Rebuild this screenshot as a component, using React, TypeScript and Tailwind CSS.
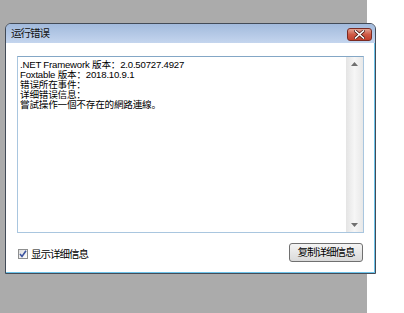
export default function App() {
  const lines = [
    ".NET Framework 版本：2.0.50727.4927",
    "Foxtable 版本：2018.10.9.1",
    "错误所在事件：",
    "详细错误信息：",
    "嘗試操作一個不存在的網路連線。",
  ];
  return (
    <div className="relative flex h-[313px] w-[404px] overflow-hidden font-['Liberation_Sans','Noto_Sans_CJK_SC',sans-serif] text-[10px] text-black">
      <div className="h-full w-[367px] bg-[#ababab]" />
      <div className="h-full flex-1 bg-white" />

      <div className="absolute left-[5px] top-[23px] flex h-[251px] w-[371px] flex-col overflow-hidden rounded-t-[6px] border border-[#434b57] bg-[#bcd0ec]">
        {/* title bar */}
        <div className="flex h-[19px] shrink-0 items-start justify-between bg-gradient-to-b from-[#a2badc] to-[#c4d5ee] pl-[5px] pr-[3px]">
          <span className="mt-[4px] text-[10.5px] leading-[11px] tracking-[-1px] text-[#111]">运行错误</span>
          <div className="mt-[4px] flex h-[13px] w-[25px] items-center justify-center rounded-[3px] border border-[#7a2a22] bg-gradient-to-b from-[#e2a393] via-[#cf5a45] to-[#c2402c]">
            <svg width="11" height="9" viewBox="0 0 11 9">
              <path d="M1.5 1 L9.5 8 M9.5 1 L1.5 8" stroke="#4a1a14" strokeWidth="3" strokeLinecap="square" />
              <path d="M1.5 1 L9.5 8 M9.5 1 L1.5 8" stroke="#ffffff" strokeWidth="1.6" strokeLinecap="square" />
            </svg>
          </div>
        </div>

        {/* body */}
        <div className="flex flex-1 flex-col border-b border-r border-[#6cc3ea] bg-white pl-[11px] pt-[13px]">
          <div className="flex h-[177px] w-[347px] border border-[#a9c6df] border-t-[#84a7c6]">
            <div className="flex-1 pl-[2px] pt-[3px] text-[9.6px] leading-[10px] tracking-[-0.2px]">
              {lines.map((l, i) => (
                <div key={i} className="h-[10px] whitespace-nowrap">{l}</div>
              ))}
            </div>
            <div className="flex w-[17px] flex-col items-center justify-between bg-gradient-to-r from-[#e4e4e4] via-[#f6f6f6] to-[#e8e8e8] py-[5px]">
              <svg width="7" height="4" viewBox="0 0 7 4"><path d="M0 4 L3.5 0 L7 4 Z" fill="#707070" /></svg>
              <svg width="7" height="4" viewBox="0 0 7 4"><path d="M0 0 L3.5 4 L7 0 Z" fill="#707070" /></svg>
            </div>
          </div>

          <div className="mt-[10px] flex w-[347px] items-center justify-between">
            <div className="ml-[1px] mt-[3px] flex items-center gap-[3px]">
              <div className="flex h-[10px] w-[10px] items-center justify-center border border-[#8e8f8f] bg-gradient-to-br from-[#dcdcdc] to-white">
                <svg width="8" height="8" viewBox="0 0 8 8">
                  <path d="M1 4 L3 6.5 L7 0.8" stroke="#3c54a0" strokeWidth="1.6" fill="none" />
                </svg>
              </div>
              <span className="text-[10.5px] leading-[11px] tracking-[-1px]">显示详细信息</span>
            </div>
            <div className="mr-[1px] flex h-[19px] w-[74px] items-center justify-center rounded-[3px] border border-[#707070] bg-gradient-to-b from-[#f4f4f4] to-[#dadada] text-[10.5px] leading-[11px] tracking-[-1px]">
              复制详细信息
            </div>
          </div>
        </div>
      </div>
    </div>
  );
}
